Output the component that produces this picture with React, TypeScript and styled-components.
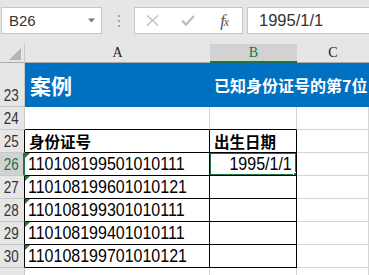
import React from "react";
import styled, { createGlobalStyle } from "styled-components";

const GREEN = "#217346";
const GRID = "#d4d4d4";
const HEAD_BG = "#e6e6e6";
const HEAD_SEL = "#d2d2d2";
const HEAD_LINE = "#ababab";
const BLUE = "#0070c0";
const BLACK = "#000000";

const Global = createGlobalStyle`
  html, body { margin: 0; padding: 0; background: ${HEAD_BG}; overflow: hidden; }
  * { box-sizing: border-box; }
`;

const Frame = styled.div`
  width: 369px;
  height: 275px;
  overflow: hidden;
  display: flex;
  flex-direction: column;
  background: ${HEAD_BG};
  font-family: "Liberation Sans", "Noto Sans CJK SC", sans-serif;
`;

const Toolbar = styled.div`
  height: 44px;
  flex: none;
  display: flex;
  align-items: flex-start;
  padding: 7px 0 0 1px;
`;

const NameBox = styled.div`
  width: 101px;
  height: 27px;
  flex: none;
  background: #fff;
  border: 1px solid #c6c6c6;
  display: flex;
  align-items: center;
  justify-content: space-between;
  padding: 0 5px 0 7px;
  font-size: 15px;
  color: #333;
`;

const Grip = styled.div`
  flex: none;
  margin: 8px 0 0 16px;
  display: flex;
  flex-direction: column;
  gap: 3px;
`;

const GripDot = styled.span`
  width: 2px;
  height: 2px;
  background: #a6a6a6;
`;

const ButtonGroup = styled.div`
  flex: none;
  margin-left: 14px;
  width: 109px;
  height: 27px;
  background: #fff;
  border: 1px solid #c6c6c6;
  display: grid;
  grid-template-columns: repeat(3, 1fr);
`;

const IconButton = styled.div`
  display: flex;
  align-items: center;
  justify-content: center;
`;

const Fx = styled.span`
  font-family: "Liberation Serif", serif;
  font-style: italic;
  font-size: 17px;
  color: #555;
  letter-spacing: -1px;
  & > small {
    font-size: 12px;
  }
`;

const FormulaInput = styled.div`
  flex: 1;
  margin: 0 -4px 0 4px;
  height: 27px;
  background: #fff;
  border: 1px solid #c6c6c6;
  display: flex;
  align-items: center;
  padding-left: 11px;
  font-size: 16.5px;
  color: #333;
`;

const Sheet = styled.div`
  display: grid;
  grid-template-columns: 25px 185px 87px 72px;
  grid-template-rows: 19px 44px;
  grid-auto-rows: 23px;
  background: #fff;
`;

const Corner = styled.div`
  background: ${HEAD_BG};
  border-right: 1px solid #c8c8c8;
  border-bottom: 1px solid ${HEAD_LINE};
  display: flex;
  align-items: flex-end;
  justify-content: flex-end;
  padding: 0 3px 2px 0;
`;

const ColHead = styled.div<{ $sel?: boolean }>`
  background: ${(p) => (p.$sel ? HEAD_SEL : HEAD_BG)};
  border-bottom: ${(p) => (p.$sel ? `2px solid ${GREEN}` : `1px solid ${HEAD_LINE}`)};
  display: flex;
  align-items: center;
  justify-content: center;
  padding-top: ${(p) => (p.$sel ? "1px" : "0")};
  font-family: "Liberation Serif", serif;
  font-size: 14px;
  color: ${(p) => (p.$sel ? GREEN : "#222")};
`;

const RowHead = styled.div<{ $sel?: boolean; $edge?: string }>`
  background: ${(p) => (p.$sel ? HEAD_SEL : HEAD_BG)};
  border-right: ${(p) => (p.$sel ? `2px solid ${GREEN}` : `1px solid ${p.$edge ?? "#c8c8c8"}`)};
  border-bottom: 1px solid #c8c8c8;
  display: flex;
  align-items: flex-end;
  justify-content: center;
  padding: 0 1px 1px 0;
  font-family: "Liberation Sans", sans-serif;
  font-size: 16.8px;
  line-height: 18px;
  color: ${(p) => (p.$sel ? GREEN : "#333")};
`;

const RowNum = styled.span`
  display: inline-block;
  transform: scaleX(0.8);
`;

const Cell = styled.div<{ $r?: string; $b?: string; $bg?: string; $span?: number; $right?: boolean }>`
  position: relative;
  grid-column: span ${(p) => p.$span ?? 1};
  background: ${(p) => p.$bg ?? "#fff"};
  border-right: 1px solid ${(p) => p.$r ?? GRID};
  border-bottom: 1px solid ${(p) => p.$b ?? GRID};
  display: flex;
  align-items: center;
  justify-content: ${(p) => (p.$right ? "flex-end" : "flex-start")};
  padding: ${(p) => (p.$right ? "0 4px 0 0" : "0 0 0 3px")};
  overflow: hidden;
  white-space: nowrap;
`;

const Title = styled.span`
  font-family: "Noto Sans CJK SC", sans-serif;
  font-weight: 700;
  font-size: 21px;
  color: #fff;
  padding-left: 2px;
`;

const Subtitle = styled.span`
  font-family: "Noto Sans CJK SC", sans-serif;
  font-weight: 700;
  font-size: 16px;
  color: #fff;
  padding-left: 1px;
`;

const HeadText = styled.span`
  font-family: "Noto Sans CJK SC", sans-serif;
  font-weight: 700;
  font-size: 15.5px;
  color: #000;
  padding-left: 1px;
`;

const Num = styled.span<{ $right?: boolean }>`
  display: inline-block;
  flex: none;
  font-family: "Liberation Sans", sans-serif;
  font-size: 18.7px;
  color: #000;
  transform: scaleX(0.856);
  transform-origin: ${(p) => (p.$right ? "right center" : "left center")};
`;

const Flag = styled.span`
  position: absolute;
  top: 0;
  left: 0;
  width: 0;
  height: 0;
  border-top: 5px solid #1d7f35;
  border-right: 5px solid transparent;
`;

const Selection = styled.span`
  position: absolute;
  left: -1px;
  top: -1px;
  right: -1px;
  bottom: -1px;
  border: 2px solid ${GREEN};
  z-index: 2;
`;

const FillHandle = styled.span`
  position: absolute;
  right: -4px;
  bottom: -4px;
  width: 7px;
  height: 7px;
  background: ${GREEN};
  border: 1px solid #fff;
  z-index: 3;
`;

const ids = [
  "110108199501010111",
  "110108199601010121",
  "110108199301010111",
  "110108199401010111",
  "110108199701010121",
];

export default function App() {
  return (
    <>
      <Global />
      <Frame>
        <Toolbar>
          <NameBox>
            <span>B26</span>
            <svg width="8" height="5" viewBox="0 0 8 5">
              <path d="M0 0.5 L7 0.5 L3.5 4.5 Z" fill="#777" />
            </svg>
          </NameBox>
          <Grip>
            <GripDot />
            <GripDot />
            <GripDot />
          </Grip>
          <ButtonGroup>
            <IconButton>
              <svg width="13" height="11" viewBox="0 0 13 11">
                <path d="M1 0.5 L12 10.5 M12 0.5 L1 10.5" stroke="#bdbdbd" strokeWidth="1.3" fill="none" />
              </svg>
            </IconButton>
            <IconButton>
              <svg width="14" height="11" viewBox="0 0 14 11">
                <path d="M1 5.5 L5 9.5 L13 1" stroke="#bdbdbd" strokeWidth="2.4" fill="none" />
              </svg>
            </IconButton>
            <IconButton>
              <Fx>
                f<small>x</small>
              </Fx>
            </IconButton>
          </ButtonGroup>
          <FormulaInput>1995/1/1</FormulaInput>
        </Toolbar>
        <Sheet>
          <Corner>
            <svg width="12" height="12" viewBox="0 0 12 12">
              <path d="M12 0 L12 12 L0 12 Z" fill="#b4b4b4" />
            </svg>
          </Corner>
          <ColHead>A</ColHead>
          <ColHead $sel>B</ColHead>
          <ColHead>C</ColHead>

          <RowHead>
            <RowNum>23</RowNum>
          </RowHead>
          <Cell $bg={BLUE} $r={BLUE} $b={BLUE}>
            <Title>案例</Title>
          </Cell>
          <Cell $bg={BLUE} $r={BLUE} $b={BLUE} $span={2}>
            <Subtitle>已知身份证号的第7位到第14位是出生日期，求出生日期</Subtitle>
          </Cell>

          <RowHead>
            <RowNum>24</RowNum>
          </RowHead>
          <Cell $b={BLACK} />
          <Cell $b={BLACK} />
          <Cell />

          <RowHead $edge={BLACK}>
            <RowNum>25</RowNum>
          </RowHead>
          <Cell $r={BLACK} $b={BLACK}>
            <HeadText>身份证号</HeadText>
          </Cell>
          <Cell $r={BLACK} $b={BLACK}>
            <HeadText>出生日期</HeadText>
          </Cell>
          <Cell />

          {ids.map((id, i) => (
            <React.Fragment key={id}>
              <RowHead $sel={i === 0} $edge={BLACK}>
                <RowNum>{26 + i}</RowNum>
              </RowHead>
              <Cell $r={BLACK} $b={BLACK}>
                <Flag />
                <Num>{id}</Num>
              </Cell>
              <Cell $r={BLACK} $b={BLACK} $right>
                {i === 0 && (
                  <>
                    <Num $right>1995/1/1</Num>
                    <Selection />
                    <FillHandle />
                  </>
                )}
              </Cell>
              <Cell />
            </React.Fragment>
          ))}

          <RowHead />
          <Cell />
          <Cell />
          <Cell />
        </Sheet>
      </Frame>
    </>
  );
}
